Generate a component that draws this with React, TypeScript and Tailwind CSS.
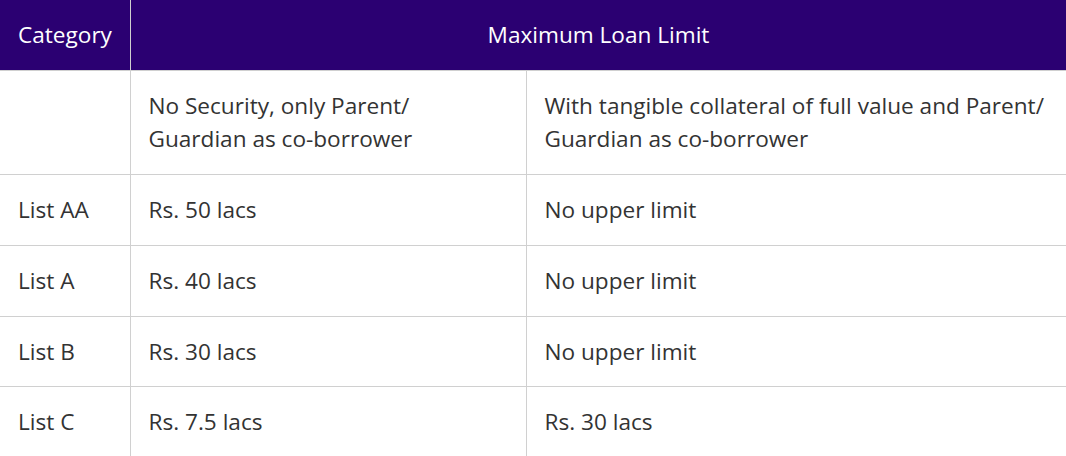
const rows = [
  { category: 'List AA', noSecurity: 'Rs. 50 lacs', collateral: 'No upper limit', height: 'h-[71px]' },
  { category: 'List A', noSecurity: 'Rs. 40 lacs', collateral: 'No upper limit', height: 'h-[71px]' },
  { category: 'List B', noSecurity: 'Rs. 30 lacs', collateral: 'No upper limit', height: 'h-[70px]' },
  { category: 'List C', noSecurity: 'Rs. 7.5 lacs', collateral: 'Rs. 30 lacs', height: 'h-[70px]' },
];

const App = () => {
  return (
    <div className="w-[1066px] h-[456px] overflow-hidden bg-white" style={{ fontFamily: '"Open Sans", "Liberation Sans", sans-serif' }}>
      <table className="w-[1067px] table-fixed border-collapse text-[22.6px] leading-[33px] text-[#333333]">
        <colgroup>
          <col className="w-[130px]" />
          <col className="w-[396px]" />
          <col className="w-[541px]" />
        </colgroup>
        <thead>
          <tr className="h-[70px] bg-[#2b0072] text-white">
            <th className="border border-[#d0d0d0] border-t-0 border-l-0 px-[18px] text-left font-normal">Category</th>
            <th colSpan={2} className="border border-[#d0d0d0] border-t-0 px-[18px] text-center font-normal">
              Maximum Loan Limit
            </th>
          </tr>
        </thead>
        <tbody>
          <tr className="h-[104px]">
            <td className="border border-[#d0d0d0] border-l-0 px-[18px]"></td>
            <td className="border border-[#d0d0d0] px-[18px] align-middle">
              No Security, only Parent/ Guardian as co-borrower
            </td>
            <td className="border border-[#d0d0d0] px-[18px] align-middle">
              With tangible collateral of full value and Parent/ Guardian as co-borrower
            </td>
          </tr>
          {rows.map((row) => (
            <tr key={row.category} className={row.height}>
              <td className="border border-[#d0d0d0] border-l-0 px-[18px]">{row.category}</td>
              <td className="border border-[#d0d0d0] px-[18px]">{row.noSecurity}</td>
              <td className="border border-[#d0d0d0] px-[18px]">{row.collateral}</td>
            </tr>
          ))}
        </tbody>
      </table>
    </div>
  );
};

export default App;
